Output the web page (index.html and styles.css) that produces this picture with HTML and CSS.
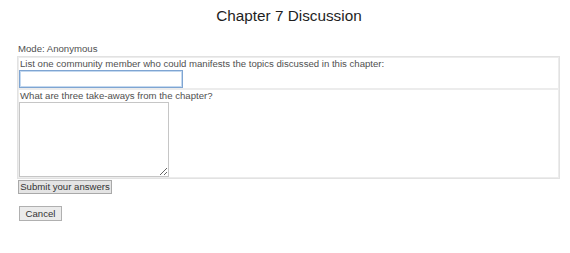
FILE: index.html
```html
<!DOCTYPE html>
<html>
<head>
<meta charset="utf-8">
<link rel="stylesheet" href="styles.css">
</head>
<body>
<h1 class="title">Chapter 7 Discussion</h1>
<div class="mode">Mode: Anonymous</div>
<table class="qtable">
  <tr>
    <td class="cell">
      <div class="q">List one community member who could manifests the topics discussed in this chapter:</div>
      <input class="answer-input" type="text">
    </td>
  </tr>
  <tr>
    <td class="cell">
      <div class="q">What are three take-aways from the chapter?</div>
      <textarea class="answer-area"></textarea>
    </td>
  </tr>
</table>
<button class="submit-btn">Submit your answers</button>
<div class="cancel-row"><button class="cancel-btn">Cancel</button></div>
</body>
</html>
```
FILE: styles.css
```css
html, body {
  margin: 0;
  padding: 0;
  background: #ffffff;
}
body {
  font-family: "Liberation Sans", Arial, sans-serif;
  font-size: 9.6px;
  color: #505050;
  padding: 0 11px 0 17px;
}
.title {
  margin: 0;
  padding-top: 7px;
  padding-left: 2px;
  height: 36px;
  box-sizing: border-box;
  font-size: 15.3px;
  font-weight: normal;
  color: #1e1e1e;
  text-align: center;
  line-height: 18px;
}
.mode {
  line-height: 12px;
  padding-top: 7px;
  height: 20px;
  box-sizing: border-box;
  padding-left: 1px;
}
.qtable {
  width: 543px;
  border-collapse: separate;
  border-spacing: 0;
  border: 1px solid #e2e2e2;
  margin: 0;
}
.cell {
  border: 1px solid #ececec;
  padding: 0;
  vertical-align: top;
}
.q {
  line-height: 12px;
  padding-left: 1px;
}
.answer-input {
  display: block;
  box-sizing: border-box;
  width: 164px;
  height: 18px;
  margin: 0;
  border: 1px solid #7fa5d2;
  outline: 1px solid #c4d9f0;
  outline-offset: -2px;
  padding: 0;
  font: inherit;
  background: #fff;
}
.answer-area {
  display: block;
  box-sizing: border-box;
  width: 150px;
  height: 75px;
  margin: 0;
  border: 1px solid #c6c6c6;
  padding: 0;
  font: inherit;
  background: #fff;
}
.submit-btn {
  display: block;
  margin: 1px 0 0 1px;
  box-sizing: border-box;
  width: 94px;
  height: 14px;
  padding: 0;
  font-family: "Liberation Sans", Arial, sans-serif;
  font-size: 9.6px;
  line-height: 12px;
  color: #333333;
  background: #e4e4e4;
  border: 1px solid #a9a9a9;
  border-radius: 0;
}
.cancel-row {
  padding-top: 12px;
  padding-left: 2px;
}
.cancel-btn {
  box-sizing: border-box;
  width: 43px;
  height: 15px;
  padding: 0;
  font-family: "Liberation Sans", Arial, sans-serif;
  font-size: 9.6px;
  line-height: 13px;
  color: #333333;
  background: #ebebeb;
  border: 1px solid #b0b0b0;
  border-radius: 0;
}
```
